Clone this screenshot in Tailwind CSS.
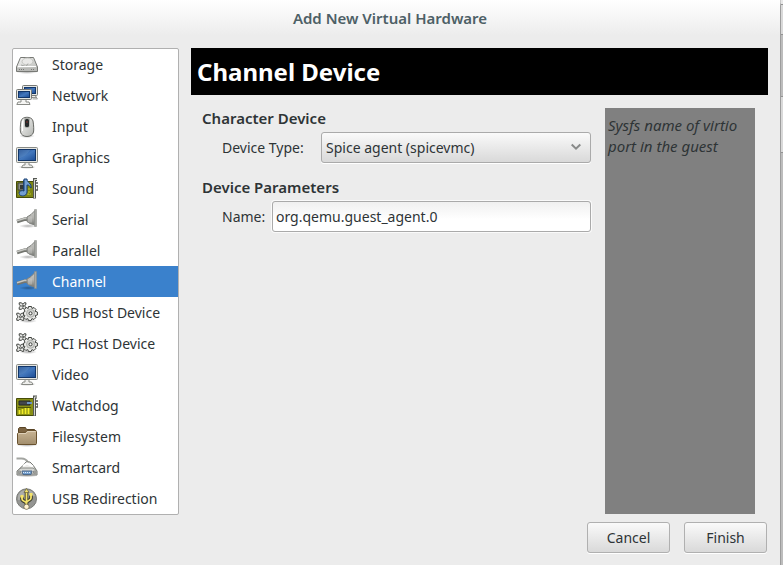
<!DOCTYPE html>
<html lang="en">
<head>
<meta charset="utf-8">
<meta name="viewport" content="width=device-width, initial-scale=1">
<title>Add New Virtual Hardware</title>
<script src="https://cdn.jsdelivr.net/npm/@tailwindcss/browser@4"></script>
</head>
<body class="flex min-h-screen bg-[#c9c9c9] font-['Noto_Sans','Open_Sans',sans-serif] text-sm text-[#2e3436]">

<svg class="absolute h-0 w-0" aria-hidden="true">
  <defs>
    <linearGradient id="metal" x1="0" y1="0" x2="1" y2="1"><stop offset="0" stop-color="#f8f8f7"/><stop offset="1" stop-color="#b4b6b2"/></linearGradient>
    <linearGradient id="screen-blue" x1="0" y1="0" x2="1" y2="1"><stop offset="0" stop-color="#1c4587"/><stop offset=".5" stop-color="#4378bd"/><stop offset="1" stop-color="#1b4b93"/></linearGradient>
    <linearGradient id="plug-metal" x1="0" y1="0" x2="0" y2="1"><stop offset="0" stop-color="#c8c8c4"/><stop offset=".5" stop-color="#b3b3af"/><stop offset="1" stop-color="#777975"/></linearGradient>
    <linearGradient id="folder-tan" x1="0" y1="0" x2="0" y2="1"><stop offset="0" stop-color="#c9b595"/><stop offset="1" stop-color="#a18d6c"/></linearGradient>
    <radialGradient id="shadow"><stop offset="0" stop-opacity=".3"/><stop offset="1" stop-opacity="0"/></radialGradient>
  </defs>
  <symbol id="storage" viewBox="0 0 22 22">
    <ellipse cx="11" cy="18" rx="11" ry="2" fill="url(#shadow)"/>
    <path d="M4.500 3.500h13l4 9.500v4.500h-21V13z" fill="url(#metal)" stroke="#777975"/>
    <path d="M1 13.500h20v3.500H1z" fill="#b9bab7"/>
    <ellipse cx="11.500" cy="7.500" rx="5.500" ry="3.500" fill="#e9e9e7" stroke="#c1c2be"/>
    <path d="M5 11l5 1.500 2-3" fill="none" stroke="#a5a7a3"/>
    <path d="M2 12.500h18" stroke="#fff"/>
    <path d="M3 15.500h6M15 15.500h4" stroke="#777975" stroke-dasharray="1 1"/>
  </symbol>
  <symbol id="monitor" viewBox="0 0 22 22">
    <ellipse cx="11" cy="20" rx="9" ry="2" fill="url(#shadow)"/>
    <path d="M9 15h4v3h2.500l1.500 2.500H5.500L7 18h2z" fill="#eeeeec" stroke="#888a85"/>
    <rect x=".5" y=".5" width="21" height="15" rx="1" fill="#e4e5e1" stroke="#888a85"/>
    <rect x="2.500" y="2.500" width="17" height="11" fill="url(#screen-blue)" stroke="#123669"/>
    <path d="M3 11.500V3h11c-2 4-6 7-11 8.500z" fill="#729fcf" opacity=".3"/>
  </symbol>
  <symbol id="network" viewBox="0 0 22 22">
    <path d="M14 9h3l4 3.500h-8z" fill="#eeeeec" stroke="#888a85"/>
    <rect x="6.500" y=".5" width="15" height="10" rx="1" fill="#e4e5e1" stroke="#777975"/>
    <rect x="8.500" y="2.500" width="11" height="6" fill="url(#screen-blue)" stroke="#123669"/>
    <path d="M5 14h5v3h3l1 2.500H.8L2 17h3z" fill="#f5f5f3" stroke="#888a85"/>
    <rect x=".5" y="4.500" width="15" height="10" rx="1" fill="#e4e5e1" stroke="#777975"/>
    <rect x="2.500" y="6.500" width="11" height="6" fill="url(#screen-blue)" stroke="#123669"/>
    <path d="M17 12.500h3.500l1 1.500h-5" fill="#ddd" stroke="#888a85" stroke-width=".7"/>
  </symbol>
  <symbol id="mouse" viewBox="0 0 22 22">
    <ellipse cx="11" cy="20" rx="8" ry="2" fill="url(#shadow)"/>
    <path d="M5 5c1-5 11-5 12 0 .7 4 1 9 .5 11-1 6-12 6-13 0C4 14 4.300 9 5 5z" fill="url(#metal)" stroke="#666864"/>
    <path d="M8 2.500c2-1 4-1 6 0l-.5 8c-1 2-4 2-5 0z" fill="#aaaca8"/>
    <rect x="9" y="3" width="4" height="8" rx="1.500" fill="#262a2b"/>
    <path d="M10.500 5h1v2h-1z" fill="#80302c"/>
    <path d="M6.500 5v10" stroke="#fff"/>
  </symbol>
  <symbol id="sound" viewBox="0 0 22 22">
    <path d="M.5 3.500h17v16H.5z" fill="#7c8514" stroke="#464c08"/>
    <path d="M2 5h7v7H2z" fill="#8d908a" stroke="#3f423f"/>
    <path d="M4 7h4v4H4z" fill="#353936"/>
    <path d="M2 16h13M13 10v7" stroke="#bcc52e" stroke-dasharray="2 1"/>
    <path d="M21 1.500h-2.500v19" fill="none" stroke="#555753" stroke-width="3"/>
    <path d="M21 1.500h-2.500v18.500" fill="none" stroke="#d3d7cf"/>
    <path d="M20 5h2M20 8h2v4h-2" fill="none" stroke="#555753" stroke-width="1.500"/>
    <path d="M9 2v11.500" stroke="#173e72" stroke-width="3.500"/>
    <path d="M8 1h3c0 4 5 4 4 9-1-2-2-3-4-3v7c0 5-8 5-8 1 0-2 3-3 5-2z" fill="#739fd1" stroke="#173e72"/>
  </symbol>
  <symbol id="plug" viewBox="0 0 22 22">
    <ellipse cx="12" cy="17" rx="9" ry="2" fill="url(#shadow)"/>
    <path d="M1 12.500l8-2.500 5 .5" fill="none" stroke="#73756f" stroke-width="3.500"/>
    <path d="M1 11.700l8-2.500 4 .5" fill="none" stroke="#c5c6c2" stroke-width="1.500"/>
    <path d="M11 8l4-2.500 4-4v14.500l-5-1.500-3-2z" fill="url(#plug-metal)" stroke="#80827e"/>
    <path d="M13 8.500v5M15 7.500v6" stroke="#d5d6d2" stroke-width=".7"/>
    <path d="M18.500.500h2v17h-2z" fill="#a7a9a5" stroke="#8b8d89" stroke-width=".5"/>
  </symbol>
  <symbol id="gears" viewBox="0 0 22 22">
    <ellipse cx="12" cy="19" rx="9" ry="2" fill="url(#shadow)"/>
    <g fill="#e9e9e7" stroke="#3f423e">
      <path d="M4 .8h1.500l.7 1h1.200l.7-1h1.800v1.700l-1 .7V4.500l1 .8v2H8.100l-.7-1H6.200l-.7 1H3.200v-2l1-.8V3.200l-1-.7V.800z"/>
      <path d="M1.200 11.200h1.700l.7 1h1.500l.7-1h2v2l-1 .7v1.500l1 .7v2.200h-2l-.7-1H3.600l-.7 1H.8v-2.200l1-.7v-1.500l-1-.7v-2z"/>
      <path d="M12.500 4.500h3l.5 2 2-1 2 2-1 1.700 2.400.8v3l-2.200.500.700 2-2 2-2-.9-.9 2h-2.500l-.7-2-2 .9-1.900-2 1-2-1.400-.7v-2.600l1.500-.7-.7-2 2-2 1.900 1z"/>
    </g>
    <circle cx="14.500" cy="11.300" r="4" fill="#d1d2cf" stroke="#aaaca8"/>
    <g fill="#fff" stroke="#3f423e"><circle cx="14.500" cy="11.300" r="1.500"/><circle cx="6.800" cy="4" r="1"/><circle cx="4.500" cy="14.800" r="1"/></g>
  </symbol>
  <symbol id="card" viewBox="0 0 22 22">
    <path d="M.5 3.500h17v17H.5z" fill="#888f16" stroke="#464c08"/>
    <path d="M3 6h11v4H3z" fill="#43464b" stroke="#24282a"/>
    <path d="M11 7h5v2h-5z" fill="#6c94c2"/>
    <path d="M2 12.500h13" stroke="#4d5508"/>
    <path d="M3.500 19v-4M6.500 19v-5M9.500 19v-6M12.500 19v-6" stroke="#f1ec28" stroke-width="1.800"/>
    <path d="M21 2h-2.500v19" fill="none" stroke="#555753" stroke-width="3"/>
    <path d="M21 2h-2.500v18.500" fill="none" stroke="#d3d7cf"/>
    <path d="M20 6h2M20 9h2v3h-2" fill="none" stroke="#555753" stroke-width="1.500"/>
  </symbol>
  <symbol id="folder" viewBox="0 0 22 22">
    <ellipse cx="11" cy="19" rx="11" ry="2" fill="url(#shadow)"/>
    <path d="M2.500 15V2.500l1-1h6l1 2h8l1 1V16z" fill="#7c6442" stroke="#594426"/>
    <path d="M1.500 7.500l1-1h7l1.500-2h9l.5 1v12l-.5 1H2l-.5-1z" fill="url(#folder-tan)" stroke="#69522f"/>
    <path d="M2.500 8.500l.5-1h7l1.500-2h8" fill="none" stroke="#ded0b8"/>
  </symbol>
  <symbol id="smartcard" viewBox="0 0 22 22">
    <ellipse cx="11" cy="18.500" rx="11" ry="2" fill="url(#shadow)"/>
    <path d="M.5 1.500h5c3 0 5 1 6.500 4" fill="none" stroke="#a3a5a1" stroke-width="2"/>
    <path d="M10 5h4l3 3 4 6v4H1v-4l6-5.500z" fill="#ededeb" stroke="#777975"/>
    <path d="M7 9l4-2.500 6 3" fill="none" stroke="#fff" stroke-width="2"/>
    <path d="M2 13l3-2h12l3 2v4H2z" fill="#d5d6d3" stroke="#888a85"/>
    <path d="M6 14h10l-1 3.500H7z" fill="#729fcf" stroke="#4f6988"/>
    <path d="M7 15.500h8" stroke="#dceafa" stroke-dasharray="1 1"/>
    <circle cx="3.800" cy="15" r="1" fill="#eee" stroke="#555753" stroke-width=".7"/><circle cx="18.200" cy="15" r="1" fill="#eee" stroke="#555753" stroke-width=".7"/>
  </symbol>
  <symbol id="usb" viewBox="0 0 22 22">
    <circle cx="10.500" cy="10.800" r="10" fill="#949592" stroke="#777975"/>
    <path d="M2 8a9 9 0 0 1 17 0C13 9 8 12 2 12z" fill="#bdbebb" opacity=".6"/>
    <g fill="none" stroke="#38382a" stroke-width="3.600"><path d="M10.500 3v15M6 8v3c0 3 4.500 1.500 4.500 5M15 7v3c0 3-4.500 2-4.500 5"/></g>
    <g fill="none" stroke="#f4e36a" stroke-width="1.800"><path d="M10.500 3v15M6 8v3c0 3 4.500 1.500 4.500 5M15 7v3c0 3-4.500 2-4.500 5"/></g>
    <path d="M10.500.500L13 4.500H8z" fill="#f4e36a" stroke="#55513a" stroke-width=".6"/>
    <path d="M13.500 5h3v3h-3z" fill="#f4e36a"/><circle cx="6" cy="8.500" r="1.800" fill="#f4e36a"/>
    <circle cx="10.500" cy="18.800" r="2.600" fill="#fff3d3" stroke="#6b6348" stroke-width=".7"/>
  </symbol>
</svg>

<main class="flex min-w-0 flex-1 flex-col rounded-tr-md border-r border-[#9d9d9d] bg-[#ececec]">
  <header class="flex h-9 items-center justify-center bg-linear-to-b from-white to-[#ececec]">
    <h1 class="text-[15px] leading-[21px] font-semibold text-[#4d6066]">Add New Virtual Hardware</h1>
  </header>

  <div class="flex flex-1 gap-3 p-3">
    <nav aria-label="Hardware types" class="w-[167px] shrink-0 self-start rounded-xs border border-[#b0b0b0] bg-white">
      <ul id="hardware"></ul>
    </nav>

    <div class="flex min-w-0 flex-1 flex-col">
      <h2 class="bg-black px-1.5 text-2xl leading-[47px] font-bold text-white">Channel Device</h2>
      <form class="flex flex-1 flex-col pr-px">
        <div class="flex flex-1 gap-3.5 pt-[13px] pr-3 pl-[11px]">
          <div class="flex min-w-0 flex-1 flex-col gap-3.5">
            <fieldset>
              <legend class="mb-[3px] text-[15px] leading-[21px] font-semibold">Character Device</legend>
              <div class="flex items-center pl-5">
                <label for="device-type" class="w-[99px] shrink-0">Device Type:</label>
                <div class="relative min-w-0 flex-1">
                  <select id="device-type" class="block h-[31px] w-full appearance-none rounded-[3px] border border-[#aaaaaa] bg-linear-to-b from-[#fafafa] to-[#d9d9d9] px-1 shadow-[0_1px_0_#fff]"><option>Spice agent (spicevmc)</option></select>
                  <svg class="pointer-events-none absolute top-2.5 right-2.5 h-2.5 w-2.5" viewBox="0 0 10 10" fill="none" stroke="#888a89" stroke-width="2" aria-hidden="true"><path d="M.7 2.500L5 6.700 9.300 2.500"/></svg>
                </div>
              </div>
            </fieldset>
            <fieldset>
              <legend class="mb-[3px] text-[15px] leading-[21px] font-semibold">Device Parameters</legend>
              <div class="flex items-center pl-5">
                <label for="name" class="w-[50px] shrink-0">Name:</label>
                <input id="name" type="text" value="org.qemu.guest_agent.0" class="h-[31px] min-w-0 flex-1 rounded-[3px] border border-[#aaaaaa] bg-linear-to-b from-[#f0f0f0] to-white to-60% px-[3px] shadow-[0_0_0_1px_#fafafa]">
              </div>
            </fieldset>
          </div>
          <p class="w-[150px] shrink-0 bg-[#808080] px-[3px] py-[7px] text-[15px] leading-[21px] italic">Sysfs name of virtio port in the guest</p>
        </div>
        <div class="flex justify-end gap-3.5 pt-2">
          <button type="button" class="h-[31px] w-[83px] rounded-[3px] border border-[#b0b0b0] bg-linear-to-b from-[#fafafa] to-[#d9d9d9] shadow-[0_1px_0_#fff]">Cancel</button>
          <button type="submit" class="h-[31px] w-[83px] rounded-[3px] border border-[#b0b0b0] bg-linear-to-b from-[#fafafa] to-[#d9d9d9] shadow-[0_1px_0_#fff]">Finish</button>
        </div>
      </form>
    </div>
  </div>
</main>
<aside class="flex w-0.5 shrink-0 flex-col bg-[#bdbdbd]" aria-hidden="true">
  <div class="h-[5px] border-b border-[#929292] bg-[#e8e8e8]"></div>
  <div class="h-[30px] border-b border-[#929292] bg-[#d9d9d9]"></div>
  <div class="h-[62px] border-b border-[#929292]"></div>
  <div class="h-14 border-b border-[#929292] bg-[#d9d9d9]"></div>
</aside>

<script>
  const items = [
    ["Storage", "storage"], ["Network", "network"], ["Input", "mouse"], ["Graphics", "monitor"],
    ["Sound", "sound"], ["Serial", "plug"], ["Parallel", "plug"], ["Channel", "plug"],
    ["USB Host Device", "gears"], ["PCI Host Device", "gears"], ["Video", "monitor"],
    ["Watchdog", "card"], ["Filesystem", "folder"], ["Smartcard", "smartcard"], ["USB Redirection", "usb"]
  ];
  document.getElementById("hardware").innerHTML = items.map(([label, icon]) => {
    const active = label === "Channel";
    return `<li><a href="#" ${active ? 'aria-current="true"' : ""} class="flex h-[31px] items-center gap-3.5 pl-[3px] ${active ? "bg-[#3a81cc] text-white" : ""}"><svg class="size-[22px] shrink-0" aria-hidden="true"><use href="#${icon}"/></svg><span class="whitespace-nowrap">${label}</span></a></li>`;
  }).join("");
</script>
</body>
</html>
